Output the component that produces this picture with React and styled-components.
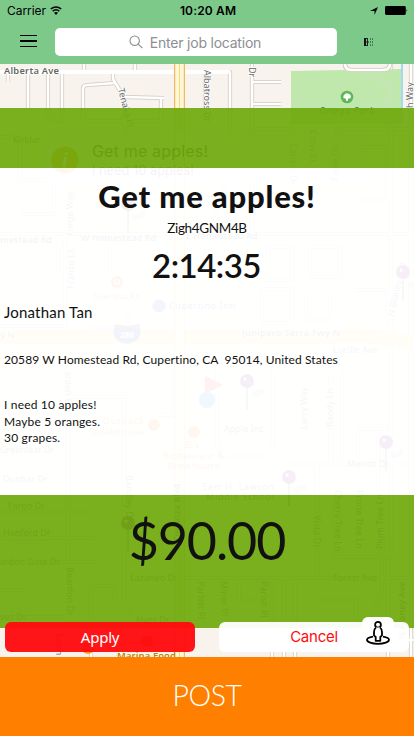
import React from 'react';
import styled, { createGlobalStyle } from 'styled-components';

const GlobalStyle = createGlobalStyle`
  * { box-sizing: border-box; }
  body { margin: 0; }
  button { border: 0; padding: 0; background: none; font: inherit; }
`;

const Screen = styled.div`
  display: grid;
  grid-template-rows: 64px 593px 79px;
  width: 414px;
  height: 736px;
  overflow: hidden;
  font-family: Lato, sans-serif;
  color: #111;
`;

const Header = styled.header`
  display: grid;
  grid-template-rows: 21px 43px;
  background: #7dc98a;
  font-family: Inter, sans-serif;
`;

const StatusBar = styled.div`
  display: grid;
  grid-template-columns: 1fr auto 1fr;
  align-items: center;
  padding: 0 6px 0 7px;
  font-size: 12px;
  color: #000;
`;

const StatusGroup = styled.div`
  display: flex;
  align-items: center;
  justify-content: ${(p) => (p.$end ? 'flex-end' : 'flex-start')};
  gap: ${(p) => (p.$end ? '7px' : '4px')};
`;

const Clock = styled.span`
  padding-left: 1px;
  font-weight: 600;
  letter-spacing: 0.15px;
`;

const Carrier = styled.span`
  letter-spacing: -0.05px;
`;

const NavBar = styled.div`
  display: grid;
  grid-template-columns: 55px 282px 1fr;
  padding-top: 7px;
`;

const MenuButton = styled.button`
  display: flex;
  width: 17px;
  height: 12px;
  margin: 7px 0 0 20px;
`;

const SearchField = styled.div`
  display: flex;
  align-items: center;
  justify-content: center;
  gap: 7px;
  height: 28px;
  padding-right: 2px;
  border-radius: 5px;
  background: #fff;
  color: #8e8e93;
  font-size: 14px;
`;

const SearchHint = styled.span`
  letter-spacing: -0.22px;
`;

const ListButton = styled.button`
  display: flex;
  width: 10px;
  height: 10px;
  margin: 9px 0 0 27px;
`;

const MapArea = styled.main`
  position: relative;
  display: flex;
  flex-direction: column;
  padding-top: 44px;
  overflow: hidden;
  background: #f8f4ed;
`;

const MapCanvas = styled.svg`
  position: absolute;
  inset: 0;
  font-family: 'Noto Sans', sans-serif;
`;

const Band = styled.div`
  position: relative;
  flex: none;
  height: ${(p) => p.$height}px;
  background: rgba(112, 169, 15, 0.935);
`;

const Details = styled.section`
  position: relative;
  flex: none;
  display: flex;
  flex-direction: column;
  height: 327px;
  background: rgba(255, 255, 255, 0.935);
`;

const Title = styled.h1`
  margin: 9px 0 0;
  font-size: 31px;
  font-weight: 900;
  line-height: 38px;
  text-align: center;
  letter-spacing: 0.8px;
  white-space: nowrap;
`;

const JobCode = styled.div`
  height: 26px;
  font-size: 13.5px;
  line-height: 26px;
  text-align: center;
  letter-spacing: -0.35px;
`;

const Countdown = styled.div`
  height: 48px;
  padding-right: 1px;
  font-size: 33px;
  font-weight: 600;
  line-height: 48px;
  text-align: center;
  letter-spacing: -0.5px;
`;

const Line = styled.div`
  margin-top: ${(p) => p.$top}px;
  padding-left: 4px;
  font-size: ${(p) => p.$size}px;
  line-height: 20px;
  letter-spacing: ${(p) => p.$track}px;
  white-space: pre;
`;

const Notes = styled.p`
  margin: 27px 0 0;
  padding-left: 4px;
  font-size: 12px;
  line-height: 16.5px;
  letter-spacing: 0.18px;
  white-space: pre-line;
`;

const Price = styled.div`
  padding-top: 13px;
  font-size: 52px;
  line-height: 64px;
  text-align: center;
  letter-spacing: -1.1px;
`;

const Actions = styled.div`
  position: relative;
  display: flex;
  justify-content: space-between;
  margin: -6px 5px 0;
`;

const ActionButton = styled.button`
  width: 190px;
  height: 30px;
  border-radius: 6px;
  background: ${(p) => (p.$primary ? 'rgba(255,10,14,.955)' : 'rgba(255,255,255,.955)')};
  color: ${(p) => (p.$primary ? '#fff' : '#ff0c0c')};
  font-family: ${(p) => (p.$primary ? "'Noto Sans'" : 'Inter')}, sans-serif;
  font-size: 15px;
  line-height: 30px;
  letter-spacing: -0.25px;
`;

const StreetViewButton = styled.button`
  position: absolute;
  right: 15px;
  bottom: 5px;
  display: flex;
  justify-content: center;
  width: 32px;
  height: 30px;
  padding-top: 3px;
  border-radius: 6px;
  background: #fff;
`;

const PostButton = styled.button`
  background: #ff8000;
  color: #fff;
  font-family: Lato, sans-serif;
  font-size: 28.5px;
  font-weight: 300;
  line-height: 76px;
  letter-spacing: -0.4px;
  padding-bottom: 3px;
`;

const minorRoads = [
  'M0 72H230V175L210 235', 'M28 72V109', 'M48 72V115Q48 121 62 121V72', 'M84 64V72M135 64V72M8 72V81',
  'M113 72V79L125 99V135', 'M83 121V89Q83 85 88 85L115 83', 'M123 97L164 98M161 98V121H83',
  'M205 72V110', 'M252 64V235', 'M252 82H281M252 104H281', 'M345 64Q345 70 352 70H382Q390 70 390 64',
  'M411 64V657', 'M0 137H20V180H54V214H22', 'M252 129H291V168H337V129H414', 'M355 200H388V147H358',
  'M0 234H414', 'M65 234V330M110 244V272M128 309V328H90', 'M58 273V244M0 326H65',
  'M268 247H292V280H267ZM310 247V277H340V247ZM262 289H292V323H262ZM306 292V320H330V292M354 290H388V322',
  'M342 370V463M331 370V463M391 64V550', 'M217 370V440Q217 454 230 456H261Q273 456 273 438V370',
  'M284 464H414M316 464V495M358 464V429H390M378 429V495', 'M68 370V559', 'M124 398V600M68 397H130L160 415H174V370',
  'M0 512H68V495M68 512H89M0 538H94M0 562H95M0 590H25', 'M91 657V590Q91 586 95 586H115V600',
  'M175 578H414M272 578V657M284 578V657M295 578V657M317 464V578M335 498V557H382M382 540V590L376 610',
  'M239 578V600H257M320 600H356V625M388 557V657', 'M267 640H414M118 657L130 640V610M0 617H65',
];

const labels = [
  { x: 13, y: 143, t: 'Kirklar' }, { x: 73, y: 236, t: 'Forge Way', r: -90 },
  { x: 81, y: 241, t: 'W Homestead Rd', b: 1 }, { x: 0, y: 243, t: 'mestead Rd', b: 1 },
  { x: 186, y: 239, t: 'E Homestead Rd', b: 1 }, { x: 74, y: 289, t: 'Franco Ct', r: -90 },
  { x: 290, y: 143, t: 'Canary Dr', r: 90 }, { x: 310, y: 130, t: 'Crow Ct', r: 90 },
  { x: 338, y: 181, t: 'Eagle Dr', r: -90 }, { x: 0, y: 338, t: 'y N', b: 1 },
  { x: 242, y: 336, t: 'Junipero Serra Fwy N', b: 1, w: 98 }, { x: 333, y: 353, t: 'Lucille Ave' },
  { x: 394, y: 317, t: 'N Blaney Ave', r: -78 }, { x: 65, y: 371, t: 'ardon Dr', r: 90 },
  { x: 0, y: 453, t: 'Greenleaf Dr' }, { x: 3, y: 482, t: 'Dunbar Dr' },
  { x: 224, y: 432, t: 'Apple Inc.' }, { x: 307, y: 429, t: 'Larry Way', r: -90 },
  { x: 333, y: 427, t: 'Randy Ln', r: -90 }, { x: 347, y: 467, t: 'Merritt Dr' },
  { x: 202, y: 490, t: 'Sam H. Lawson', w: 72 }, { x: 206, y: 500, t: 'Middle School', w: 68 },
  { x: 8, y: 509, t: 'Fargo Dr' }, { x: 3, y: 536, t: 'Hanford Dr' }, { x: 0, y: 565, t: 'ardon Gate Dr', w: 60 },
  { x: 67, y: 567, t: 'Beardon Dr', r: 90 }, { x: 126, y: 475, t: 'Bandley Dr', r: 90 },
  { x: 180, y: 550, t: 'N De Anza Blvd', r: -90, b: 1 }, { x: 130, y: 581, t: 'Lazaneo Dr' },
  { x: 198, y: 581, t: 'Parlett Pl', r: 90 }, { x: 221, y: 581, t: 'Miner Pl', r: 90 },
  { x: 261, y: 581, t: 'Parish Pl', r: 90 }, { x: 314, y: 515, t: 'Vista Dr', r: 90 },
  { x: 335, y: 490, t: 'Cherry Tree Ln', r: 90 }, { x: 356, y: 490, t: 'Prune Tree Ln', r: 90 },
  { x: 383, y: 549, t: 'Plum Tree Ln', r: -90 }, { x: 333, y: 581, t: 'Forest Ave' },
  { x: 405, y: 639, t: 'N Blaney Ave', r: -90, b: 1 }, { x: 0, y: 620, t: 'ves Dr' },
  { x: 135, y: 623, t: 'Alves Dr' }, { x: 328, y: 630, t: 'one', r: 90 },
];

const places = [
  { x: 93, y: 299, t: 'Starbucks', w: 47 }, { x: 103, y: 424, t: 'Outback', w: 41 }, { x: 89, y: 434.5, t: 'Steakhouse', w: 55 },
  { x: 185, y: 448, t: "BJ's" }, { x: 163, y: 458.5, t: 'Restaurant &', w: 61 }, { x: 168, y: 469, t: 'Brewhouse', w: 52 },
];

const pins = [[128, 204], [403, 272], [247, 381], [386, 442], [289, 477], [128, 523]];

function Pin({ at: [x, y] }) {
  return (
    <g>
      <path d={`M${x + 5} ${y + 14}L${x + 17} ${y + 10}`} stroke="#777" strokeWidth="6" opacity=".3" />
      <path d={`M${x} ${y}V${y + 29}`} stroke="#777" strokeWidth="1.5" />
      <circle cx={x} cy={y} r="7" fill="#8c1a98" />
      <circle cx={x - 2} cy={y - 2} r="1.5" fill="#fff" />
    </g>
  );
}

function CityMap() {
  return (
    <MapCanvas width="414" height="593" viewBox="0 64 414 593">
      <rect y="64" width="414" height="593" fill="#f8f4ed" />
      <g fill="none" strokeLinejoin="round">
        {minorRoads.map((d) => <path key={d} d={d} stroke="#cfc7bb" strokeWidth="4.2" />)}
        {minorRoads.map((d) => <path key={d} d={d} stroke="#fff" strokeWidth="2.7" />)}
        <path d="M0 72H230" stroke="#fff" strokeWidth="4" />
        <path d="M291 71L345 70L401 69V124H291Z" fill="#c0e8ad" />
        <path d="M345 64Q345 70 352 70H382Q390 70 390 64" stroke="#cfc7bb" strokeWidth="4.2" />
        <path d="M345 64Q345 70 352 70H382Q390 70 390 64" stroke="#fff" strokeWidth="2.7" />
        <path d="M367 73V78H380V81H390V96L386 103V110" stroke="#d1dccb" strokeWidth="1" />
        <path d="M402 64V124" stroke="#a2daf3" strokeWidth="2" />
        <path d="M0 337H330Q370 333 414 344" stroke="#f8d967" strokeWidth="14" />
        <path d="M0 337H330Q370 333 414 344" stroke="#fff2bc" strokeWidth="1.5" />
        <path d="M179.5 64V657" stroke="#f2b86e" strokeWidth="11" />
        <path d="M179.5 64V657" stroke="#fff8d2" strokeWidth="8.5" />
        <path d="M179.5 64V657" stroke="#ebd994" strokeWidth="1" />
      </g>

      <g fill="#666" stroke="#fff" strokeWidth="1.4" paintOrder="stroke" fontSize="9">
        <text x="4" y="74" fontWeight="600" fontSize="9.3" textLength="55">Alberta Ave</text>
        <text transform="translate(118 89) rotate(76)">Tenaka Pl</text>
        <text transform="translate(204 70) rotate(90)">Albatross Dr</text>
        <text transform="translate(249 67) rotate(90)">Dr</text>
        <text transform="translate(413 108) rotate(-90)" fontSize="9">h Way</text>
        <text x="319" y="114" fill="#438039" stroke="#c0e8ad" fontStyle="italic" textLength="55">Ortega Park</text>
        <text transform="translate(55.5 633) rotate(90)">Saich</text>
        {labels.map((l) => (
          <text key={`${l.t}${l.x}`} transform={`translate(${l.x} ${l.y}) rotate(${l.r || 0})`} fontWeight={l.b ? 600 : 400} textLength={l.w}>{l.t}</text>
        ))}
      </g>
      <circle cx="347" cy="97" r="6.3" fill="#5eb759" />
      <path d="M343.3 97.7Q343 95 345.2 94Q346 92.7 348.5 93.7Q351.5 94.5 350.7 97.7Q349.8 98.9 348 98.4V100.8H346V98.4Q344 98.8 343.3 97.7Z" fill="#fff" />

      <g fill="#e5892f" fontSize="9">
        {places.map((p) => <text key={p.t} x={p.x} y={p.y} textLength={p.w}>{p.t}</text>)}
        <circle cx="117" cy="282" r="6" />
        <circle cx="154" cy="425" r="6" />
        <circle cx="194" cy="432" r="6" />
        <circle cx="88" cy="648" r="6" fill="#f3a32d" />
        <circle cx="147" cy="641" r="6" />
        <path d="M114.5 280H119.5V284H114.5Z" fill="none" stroke="#fff" />
      </g>
      <text x="117" y="659" fill="#ba8217" stroke="#fff9d9" strokeWidth="1.5" paintOrder="stroke" fontSize="9.5" fontWeight="600" textLength="59">Marina Food</text>
      <circle cx="159" cy="306" r="6.5" fill="#5868d8" />
      <text x="169" y="309" fontSize="9" fill="#5868d8" textLength="66">Cupertino Inn</text>
      <path d="M115 324Q127 328 139 324Q145 341 127 344Q109 341 115 324Z" fill="#3268c3" />
      <path d="M115 324Q127 328 139 324V328H115Z" fill="#c75050" />
      <text x="127" y="338" textAnchor="middle" fill="#fff" fontSize="8" fontWeight="700">280</text>
      <circle cx="207" cy="400" r="8" fill="#1687ff" />
      <path d="M205 376L223 385L205 394Z" fill="#ff4636" />
      {pins.map((at) => <Pin key={at.join()} at={at} />)}

      <rect x="40" y="134" width="330" height="50" rx="5" fill="#fff" opacity=".35" />
      <circle cx="65" cy="160" r="13.5" fill="#ff7600" />
      <text x="65" y="167" textAnchor="middle" fill="#fff" fontFamily="Liberation Serif" fontSize="22" fontWeight="700" fontStyle="italic">i</text>
      <g fontFamily="Inter">
        <text x="92" y="157" fontSize="16" fill="#000" textLength="116">Get me apples!</text>
        <text x="92" y="175" fontSize="13" fill="#555" textLength="102">I need 10 apples!</text>
      </g>
    </MapCanvas>
  );
}

function WifiIcon() {
  return (
    <svg width="12" height="9" viewBox="0 0 12 9" fill="none" stroke="#000" strokeWidth="1.5">
      <path d="M.7 3Q6-1.2 11.3 3M2.7 5.2Q6 2.5 9.3 5.2" />
      <path d="M4 6.7Q6 5.3 8 6.7L6 9Z" fill="#000" stroke="none" />
    </svg>
  );
}

function StreetViewIcon() {
  return (
    <svg width="26" height="26" viewBox="0 0 26 26" fill="none" stroke="#000" strokeWidth="1.8" strokeLinejoin="round">
      <path d="M8 16.6C4 17.2 2 18.4 2 19.7C2 22.1 7 23.8 13 23.8S24 22.1 24 19.7C24 18.4 22 17.2 18 16.6" />
      <circle cx="13" cy="4.7" r="2.9" fill="#fff" />
      <path d="M10.9 7.6Q9 9 9 12V15.4L10.7 17V20.8H15.3V17L17 15.4V12Q17 9 15.1 7.6" fill="#fff" />
    </svg>
  );
}

export default function App() {
  return (
    <Screen>
      <GlobalStyle />
      <Header>
        <StatusBar>
          <StatusGroup><Carrier>Carrier</Carrier><WifiIcon /></StatusGroup>
          <Clock>10:20 AM</Clock>
          <StatusGroup $end>
            <svg width="8" height="8" viewBox="0 0 8 8"><path d="M0 4L8 0L4.5 8V4Z" fill="#000" /></svg>
            <svg width="23" height="9" viewBox="0 0 23 9">
              <rect width="20.8" height="9" rx="1.4" />
              <path d="M21.6 3Q23 4.5 21.6 6Z" />
            </svg>
          </StatusGroup>
        </StatusBar>
        <NavBar>
          <MenuButton aria-label="Menu">
            <svg width="17" height="12" viewBox="0 0 17 12"><path d="M0 0H17V1H0ZM0 5H17V7H0ZM0 11H17V12H0Z" /></svg>
          </MenuButton>
          <SearchField>
            <svg width="14" height="14" viewBox="0 0 14 14" fill="none" stroke="#8e8e93" strokeWidth="1.1">
              <circle cx="5.7" cy="5.7" r="4.7" /><path d="M9.2 9.2L13.3 13" />
            </svg>
            <SearchHint>Enter job location</SearchHint>
          </SearchField>
          <ListButton aria-label="List">
            <svg width="10" height="10" viewBox="0 0 10 10">
              <path d="M.5 1V9M1.5 1V9" stroke="#111" fill="none" />
              <path d="M2 1.5H4M2 5H5M2 8.5H4M3.5 2V8M6 2H7M8 2H9M6 5H7M8 5H9M6 8H7M8 8H9" stroke="#222" fill="none" />
            </svg>
          </ListButton>
        </NavBar>
      </Header>

      <MapArea>
        <CityMap />
        <Band $height={60} />
        <Details>
          <Title>Get me apples!</Title>
          <JobCode>Zigh4GNM4B</JobCode>
          <Countdown>2:14:35</Countdown>
          <Line $top={13} $size={15} $track={0.2}>Jonathan Tan</Line>
          <Line $top={28} $size={12} $track={0.1}>{'20589 W Homestead Rd, Cupertino, CA  95014, United States'}</Line>
          <Notes>{'I need 10 apples!\nMaybe 5 oranges.\n30 grapes.'}</Notes>
        </Details>
        <Band $height={133}><Price>$90.00</Price></Band>
        <Actions>
          <ActionButton $primary>Apply</ActionButton>
          <ActionButton>Cancel</ActionButton>
          <StreetViewButton aria-label="Street view"><StreetViewIcon /></StreetViewButton>
        </Actions>
      </MapArea>

      <PostButton>POST</PostButton>
    </Screen>
  );
}
